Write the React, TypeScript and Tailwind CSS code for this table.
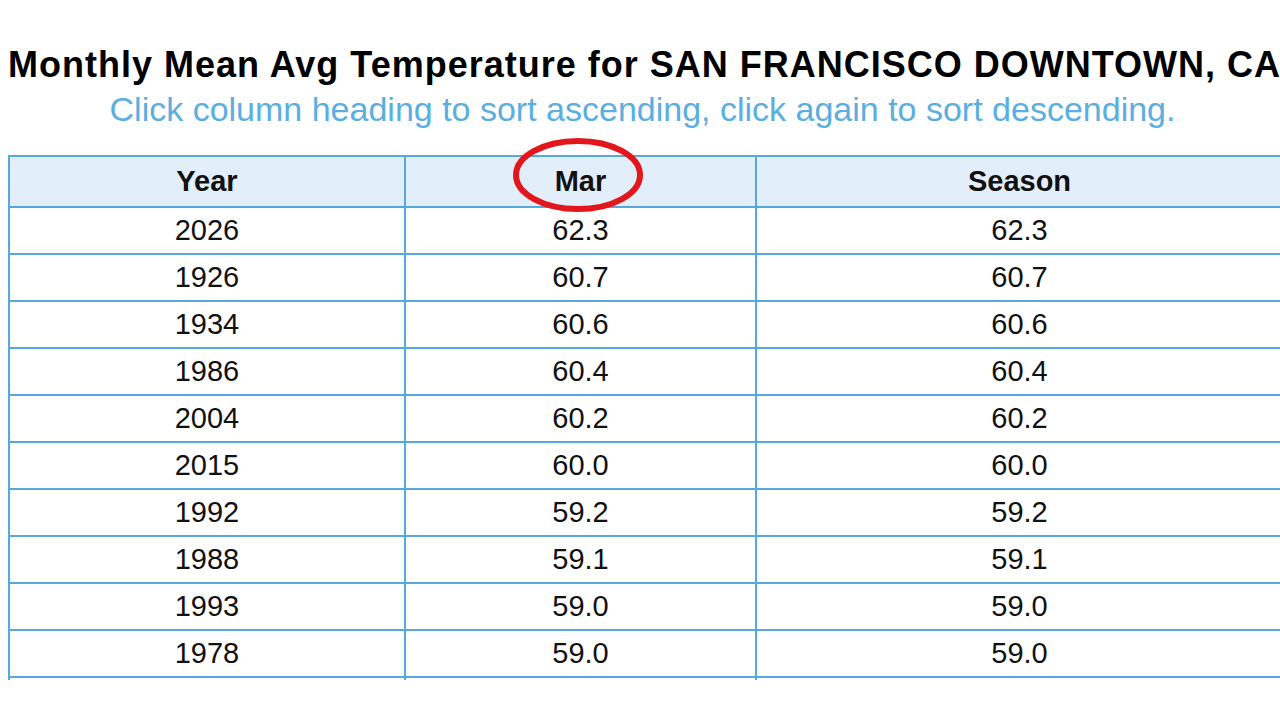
import React from "react";

const rows: [string, string, string][] = [
  ["2026", "62.3", "62.3"],
  ["1926", "60.7", "60.7"],
  ["1934", "60.6", "60.6"],
  ["1986", "60.4", "60.4"],
  ["2004", "60.2", "60.2"],
  ["2015", "60.0", "60.0"],
  ["1992", "59.2", "59.2"],
  ["1988", "59.1", "59.1"],
  ["1993", "59.0", "59.0"],
  ["1978", "59.0", "59.0"],
];

export default function App() {
  return (
    <div
      className="relative w-[1280px] h-[720px] overflow-hidden bg-white text-[#111]"
      style={{ fontFamily: '"Liberation Sans", Arial, sans-serif' }}
    >
      <div className="pt-[45px] pl-[8px] whitespace-nowrap">
        <h1 className="text-[36px] leading-[40px] font-bold text-black m-0 tracking-[1px]">
          Monthly Mean Avg Temperature for SAN FRANCISCO DOWNTOWN, CA
        </h1>
      </div>
      <p className="text-center text-[34px] leading-[40px] text-[#5aaee0] whitespace-nowrap mt-[4px] pl-[5px]">
        Click column heading to sort ascending, click again to sort descending.
      </p>
      <div className="mt-[26px] ml-[8px] h-[525px] overflow-hidden">
        <table className="border-collapse w-[1274px] table-fixed text-[29px]">
          <colgroup>
            <col className="w-[396px]" />
            <col className="w-[351px]" />
            <col className="w-[527px]" />
          </colgroup>
          <thead>
            <tr className="bg-[#e2effa] h-[51px]">
              <th className="border-2 border-[#55a9dc] font-bold text-center p-0">Year</th>
              <th className="border-2 border-[#55a9dc] font-bold text-center p-0">Mar</th>
              <th className="border-2 border-[#55a9dc] font-bold text-center p-0">Season</th>
            </tr>
          </thead>
          <tbody>
            {rows.map((r, i) => (
              <tr key={i} className="h-[47px]">
                <td className="border-2 border-[#55a9dc] text-center p-0">{r[0]}</td>
                <td className="border-2 border-[#55a9dc] text-center p-0">{r[1]}</td>
                <td className="border-2 border-[#55a9dc] text-center p-0">{r[2]}</td>
              </tr>
            ))}
            <tr className="h-[6px]">
              <td className="border-x-2 border-[#55a9dc] p-0"></td>
              <td className="border-x-2 border-[#55a9dc] p-0"></td>
              <td className="border-x-2 border-[#55a9dc] p-0"></td>
            </tr>
          </tbody>
        </table>
      </div>
      <svg
        className="absolute left-0 top-0 pointer-events-none"
        width="1280"
        height="720"
        viewBox="0 0 1280 720"
      >
        <ellipse cx="578" cy="175" rx="62" ry="34" fill="none" stroke="#e3161b" strokeWidth="6" />
      </svg>
    </div>
  );
}
